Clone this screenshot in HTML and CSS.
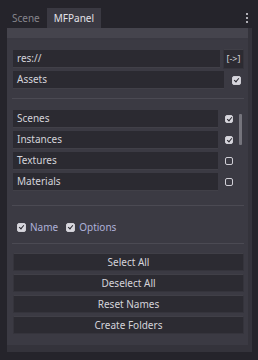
FILE: index.html
```html
<!DOCTYPE html>
<html lang="en">
<head>
  <meta charset="UTF-8">
  <title>MFPanel</title>
  <link rel="stylesheet" href="styles.css">
</head>
<body>
  <div class="dock">
    <div class="tabbar">
      <div class="tab">Scene</div>
      <div class="tab active">MFPanel</div>
      <div class="menu"><span></span><span></span><span></span></div>
    </div>

    <div class="panel">
      <div class="inner">
        <div class="path-row">
          <div class="field path">res://</div>
          <div class="btn small">[-&gt;]</div>
        </div>
        <div class="check-row">
          <div class="field grow">Assets</div>
          <span class="box on"></span>
        </div>

        <div class="sep"></div>

        <div class="list">
          <div class="items">
            <div class="check-row item">
              <div class="field grow">Scenes</div>
              <span class="box on"></span>
            </div>
            <div class="check-row item">
              <div class="field grow">Instances</div>
              <span class="box on"></span>
            </div>
            <div class="check-row item">
              <div class="field grow">Textures</div>
              <span class="box"></span>
            </div>
            <div class="check-row item">
              <div class="field grow">Materials</div>
              <span class="box"></span>
            </div>
          </div>
          <div class="scrollbar"><div class="grabber"></div></div>
        </div>

        <div class="sep"></div>

        <div class="options">
          <label class="opt"><span class="box on"></span>Name</label>
          <label class="opt"><span class="box on"></span>Options</label>
        </div>

        <div class="sep"></div>

        <div class="buttons">
          <div class="btn">Select All</div>
          <div class="btn">Deselect All</div>
          <div class="btn">Reset Names</div>
          <div class="btn">Create Folders</div>
        </div>
      </div>
    </div>
  </div>
</body>
</html>
```

FILE: styles.css
```css
body {
  margin: 0;
  background: #25242b;
  font-family: "Noto Sans", sans-serif;
  font-size: 10px;
  color: #d4d3da;
}
.dock {
  width: 258px;
  height: 360px;
  display: flex;
  flex-direction: column;
}
.tabbar {
  height: 28px;
  display: flex;
  align-items: flex-end;
  padding-left: 5px;
  position: relative;
}
.tab {
  height: 20px;
  line-height: 20px;
  padding: 0 7px;
  color: #86858c;
}
.tab.active {
  background: #3a3942;
  color: #e2e1e8;
}
.menu {
  position: absolute;
  right: 10px;
  top: 13px;
  display: flex;
  flex-direction: column;
  gap: 2px;
}
.menu span {
  width: 2px;
  height: 2px;
  background: #b0afb6;
}
.panel {
  margin: 0 6px 8px 7px;
  flex: 1;
  background: #34333b;
  display: flex;
}
.inner {
  flex: 1;
  margin-right: 4px;
  margin-bottom: 7px;
  background: linear-gradient(#45444d 0, #45444d 10px, #3a3942 10px, #3a3942 12px, #3b3a43 12px);
  padding: 21px 4px 0 6px;
  display: flex;
  flex-direction: column;
}
.field {
  background: #2b2a31;
  border-bottom: 1px solid #414048;
  height: 17px;
  line-height: 17px;
  padding-left: 4px;
  white-space: nowrap;
  overflow: hidden;
}
.path-row {
  display: flex;
  align-items: center;
  gap: 3px;
}
.path {
  width: 203px;
  flex: none;
}
.btn {
  background: #2c2b32;
  border: 1px solid #35343c;
  border-top-color: #403f47;
  text-align: center;
  height: 16px;
  line-height: 16px;
  color: #d4d3da;
}
.btn.small {
  width: 19px;
  height: 18px;
  line-height: 18px;
  font-size: 9px;
}
.check-row {
  display: flex;
  align-items: center;
  margin-top: 2px;
}
.grow {
  flex: 1;
}
.check-row > .box {
  margin: 0 3px 0 8px;
}
.box {
  display: inline-block;
  width: 9px;
  height: 9px;
  box-sizing: border-box;
  border: 1.5px solid #cfced5;
  border-radius: 2px;
  position: relative;
  flex: none;
}
.box.on {
  background: #d8d7de;
}
.box.on::after {
  content: "";
  position: absolute;
  left: 1.5px;
  top: 0;
  width: 2px;
  height: 4px;
  border: solid #2a2930;
  border-width: 0 1.5px 1.5px 0;
  transform: rotate(40deg);
}
.sep {
  height: 1px;
  background: #4b4a53;
  margin: 9px 0 0 -1px;
}
.list {
  margin-top: 8px;
  height: 89px;
  display: flex;
  overflow: hidden;
}
.items {
  flex: 1;
}
.list .item {
  margin: 3px 0 0;
  height: 18px;
}
.list .item .field {
  height: 17px;
}
.list .item .box {
  margin: 0 6px 0 7px;
  width: 8px;
  height: 8px;
}
.scrollbar {
  width: 3px;
  padding-top: 7px;
  margin-right: 2px;
}
.grabber {
  height: 31px;
  background: #75747c;
  border-radius: 1px;
}
.options {
  display: flex;
  gap: 8px;
  padding: 16px 0 0 4px;
  height: 12px;
}
.opt {
  display: flex;
  align-items: center;
  gap: 4px;
  color: #aeb1d9;
  height: 10px;
}
.buttons {
  margin-top: 9px;
  display: flex;
  flex-direction: column;
  gap: 3px;
}
.buttons .btn {
  height: 16px;
  line-height: 16px;
}
```
